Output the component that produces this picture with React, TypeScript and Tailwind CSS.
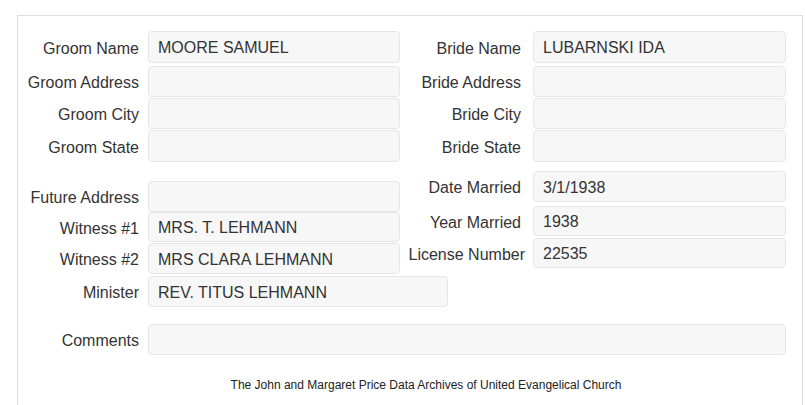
const font = { fontFamily: '"Liberation Sans", Arial, sans-serif' };

function Field({
  label,
  value,
  labelW,
  gap,
  inputW,
  h,
  mt,
  labelShift = '',
}: {
  label: string;
  value?: string;
  labelW: string;
  gap: string;
  inputW: string;
  h: string;
  mt: string;
  labelShift?: string;
}) {
  return (
    <div className={`flex items-center ${h} ${mt}`}>
      <div className={`${labelW} shrink-0 text-right text-[16px] text-[#333333] pt-[3px] whitespace-nowrap ${labelShift}`}>
        {label}
      </div>
      <div
        className={`${gap} ${inputW} h-full shrink-0 flex items-center rounded-[4px] border border-[#e6e6e6] bg-[#f7f7f7] pl-[9px] pt-[2px] text-[16px] text-[#333333]`}
      >
        {value}
      </div>
    </div>
  );
}

export default function App() {
  const L = { labelW: 'w-[121px]', gap: 'ml-[9px]', inputW: 'w-[252px]' };
  const R = { labelW: 'w-[118px]', gap: 'ml-[12px]', inputW: 'w-[253px]' };
  return (
    <div className="w-[805px] h-[405px] overflow-hidden bg-white pt-[15px] pl-[17px] pr-[2px]" style={font}>
      <div className="h-[400px] border border-b-0 border-[#dddddd] pt-[15px]">
        <div className="flex">
          <div className="w-[383px]">
            <Field label="Groom Name" value="MOORE SAMUEL" {...L} h="h-[32px]" mt="mt-0" />
            <Field label="Groom Address" {...L} h="h-[31px]" mt="mt-[3px]" />
            <Field label="Groom City" {...L} h="h-[31px]" mt="mt-[1px]" />
            <Field label="Groom State" {...L} h="h-[32px]" mt="mt-[1px]" />
          </div>
          <div className="ml-[2px]">
            <Field label="Bride Name" value="LUBARNSKI IDA" {...R} h="h-[32px]" mt="mt-0" />
            <Field label="Bride Address" {...R} h="h-[31px]" mt="mt-[3px]" />
            <Field label="Bride City" {...R} h="h-[31px]" mt="mt-[1px]" />
            <Field label="Bride State" {...R} h="h-[32px]" mt="mt-[1px]" />
          </div>
        </div>
        <div className="flex">
          <div className="w-[383px]">
            <Field label="Future Address" {...L} h="h-[31px]" mt="mt-[19px]" />
            <Field label="Witness #1" value="MRS. T. LEHMANN" {...L} h="h-[30px]" mt="mt-0" />
            <Field label="Witness #2" value="MRS CLARA LEHMANN" {...L} h="h-[31px]" mt="mt-[1px]" />
            <Field label="Minister" value="REV. TITUS LEHMANN" {...L} inputW="w-[300px]" h="h-[31px]" mt="mt-[2px]" />
          </div>
          <div className="ml-[2px]">
            <Field label="Date Married" value="3/1/1938" {...R} h="h-[31px]" mt="mt-[9px]" />
            <Field label="Year Married" value="1938" {...R} h="h-[30px]" mt="mt-[4px]" />
            <Field
              label="License Number"
              value="22535"
              {...R}
              h="h-[30px]"
              mt="mt-[2px]"
              labelShift="relative left-[4px]"
            />
          </div>
        </div>
        <Field label="Comments" {...L} inputW="w-[638px]" h="h-[31px]" mt="mt-[17px]" />
        <div className="mt-[22px] pl-[32px] text-center text-[12px] leading-[17px] text-[#222222]">
          The John and Margaret Price Data Archives of United Evangelical Church
        </div>
      </div>
    </div>
  );
}
